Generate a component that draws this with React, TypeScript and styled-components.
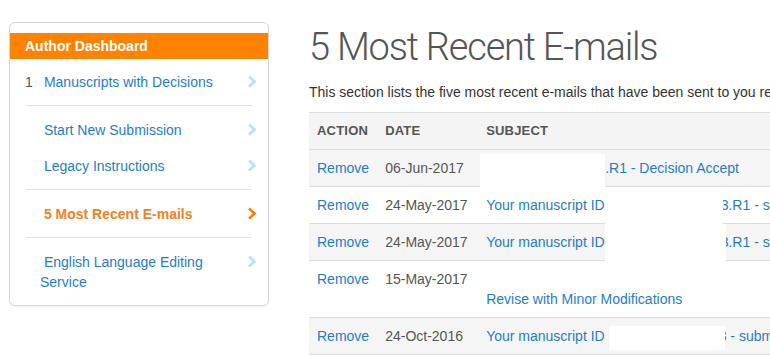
import React from 'react';
import styled, { createGlobalStyle } from 'styled-components';

const GlobalStyle = createGlobalStyle`
  html, body {
    margin: 0;
    overflow: hidden;
    background: #fff;
    font-family: "Liberation Sans", Arial, sans-serif;
  }
`;

const Page = styled.div`
  display: flex;
  align-items: flex-start;
  gap: 40px;
  padding: 22px 0 0 9px;
  width: 1200px;
`;

const Card = styled.nav`
  width: 258px;
  flex-shrink: 0;
  border: 1px solid #d6d6d6;
  border-radius: 6px;
  padding-top: 10px;
  box-shadow: 0 1px 2px rgba(0, 0, 0, 0.06);
`;

const CardHeader = styled.div`
  background: #ff8200;
  color: #fff;
  font-weight: bold;
  font-size: 14px;
  line-height: 26px;
  padding-left: 15px;
`;

const Group = styled.div<{ $first?: boolean }>`
  padding: ${(p) => (p.$first ? '5px' : '6px')} 0 5px;
  margin: 0 16px;
  & + & {
    border-top: 1px solid #e2e2e2;
  }
`;

const Item = styled.div<{ $active?: boolean }>`
  display: flex;
  align-items: flex-start;
  padding: 8px 0;
  margin: 0 -5px 0 -1px;
  font-size: 14px;
  line-height: 20px;
  color: ${(p) => (p.$active ? '#f7801e' : '#1e7ec8')};
  font-weight: ${(p) => (p.$active ? 'bold' : 'normal')};
`;

const Num = styled.span`
  width: 15px;
  flex-shrink: 0;
  color: #555;
  font-weight: normal;
`;

const Label = styled.span`
  flex: 1;
  white-space: pre-wrap;
`;

const Chevron = styled.svg`
  flex-shrink: 0;
  margin-top: 3px;
`;

const Main = styled.main`
  width: 620px;
  flex-shrink: 0;
  padding-top: 2px;
`;

const Title = styled.h1`
  margin: 0;
  font-family: Roboto, "Open Sans", sans-serif;
  font-weight: 300;
  font-size: 38px;
  letter-spacing: -1.2px;
  line-height: 46px;
  color: #555;
`;

const Intro = styled.p`
  margin: 12px 0 10px 0;
  font-size: 14px;
  line-height: 20px;
  color: #333;
  white-space: nowrap;
`;

const Table = styled.table`
  width: 620px;
  border-collapse: separate;
  border-spacing: 0;
  border-top: 1px solid #dcdcdc;
  font-size: 14px;
  line-height: 20px;
`;

const Th = styled.th<{ $w?: number }>`
  text-align: left;
  background: #f4f4f4;
  color: #555;
  font-size: 13px;
  letter-spacing: 0.2px;
  font-weight: bold;
  padding: 8px;
  border-bottom: 1px solid #dcdcdc;
  width: ${(p) => (p.$w ? `${p.$w}px` : 'auto')};
  box-sizing: border-box;
`;

const Row = styled.tr<{ $shade?: boolean }>`
  background: ${(p) => (p.$shade ? '#f5f5f5' : '#fff')};
`;

const Td = styled.td`
  position: relative;
  vertical-align: top;
  padding: 8px;
  border-bottom: 1px solid #dcdcdc;
  color: #555;
  white-space: nowrap;
`;

const Link = styled.span`
  color: #1e7ec8;
`;

const Gap = styled.span<{ $w: number }>`
  display: inline-block;
  width: ${(p) => p.$w}px;
`;

const BlankLine = styled.span`
  display: block;
  height: 20px;
`;

// white boxes laid over the redacted part of a subject
const Redact = styled.span<{ $x: number; $y: number; $w: number; $h: number }>`
  position: absolute;
  left: ${(p) => p.$x}px;
  top: ${(p) => p.$y}px;
  width: ${(p) => p.$w}px;
  height: ${(p) => p.$h}px;
  background: #fff;
`;

const ChevronIcon = ({ color }: { color: string }) => (
  <Chevron width="10" height="13" viewBox="0 0 10 13">
    <polyline
      points="2,1.5 7.5,6.5 2,11.5"
      fill="none"
      stroke={color}
      strokeWidth="2.6"
    />
  </Chevron>
);

type NavItem = { num?: string; label: string; active?: boolean };

const groups: NavItem[][] = [
  [{ num: '1', label: ' Manuscripts with Decisions' }],
  [{ label: ' Start New Submission' }, { label: ' Legacy Instructions' }],
  [{ label: ' 5 Most Recent E-mails', active: true }],
  [{ label: ' English Language Editing Service' }],
];

export default function App() {
  return (
    <>
      <GlobalStyle />
      <Page>
        <Card>
          <CardHeader>Author Dashboard</CardHeader>
          {groups.map((group, gi) => (
            <Group key={gi} $first={gi === 0}>
              {group.map((item) => (
                <Item key={item.label} $active={item.active}>
                  <Num>{item.num}</Num>
                  <Label>{item.label}</Label>
                  <ChevronIcon color={item.active ? '#ff8000' : '#b5e2f6'} />
                </Item>
              ))}
            </Group>
          ))}
        </Card>

        <Main>
          <Title>5 Most Recent E-mails</Title>
          <Intro>
            This section lists the five most recent e-mails that have been sent to you
            regarding your manuscripts.
          </Intro>
          <Table>
            <thead>
              <tr>
                <Th $w={68}>ACTION</Th>
                <Th $w={101}>DATE</Th>
                <Th>SUBJECT</Th>
              </tr>
            </thead>
            <tbody>
              <Row $shade>
                <Td><Link>Remove</Link></Td>
                <Td>06-Jun-2017</Td>
                <Td>
                  <Link>
                    <Gap $w={119} />
                    .R1 - Decision Accept
                  </Link>
                  <Redact $x={2} $y={4} $w={125} $h={33} />
                </Td>
              </Row>
              <Row>
                <Td><Link>Remove</Link></Td>
                <Td>24-May-2017</Td>
                <Td>
                  <Link>
                    Your manuscript ID
                    <Gap $w={116} />
                    3.R1 - submitted
                  </Link>
                  <Redact $x={127} $y={0} $w={118} $h={37} />
                </Td>
              </Row>
              <Row $shade>
                <Td><Link>Remove</Link></Td>
                <Td>24-May-2017</Td>
                <Td>
                  <Link>
                    Your manuscript ID
                    <Gap $w={116} />
                    3.R1 - submitted
                  </Link>
                  <Redact $x={127} $y={0} $w={121} $h={37} />
                </Td>
              </Row>
              <Row>
                <Td><Link>Remove</Link></Td>
                <Td>15-May-2017</Td>
                <Td>
                  <Link>
                    <BlankLine />
                    Revise with Minor Modifications
                  </Link>
                </Td>
              </Row>
              <Row $shade>
                <Td><Link>Remove</Link></Td>
                <Td>24-Oct-2016</Td>
                <Td>
                  <Link>
                    Your manuscript ID
                    <Gap $w={114} />
                    3 - submitted
                  </Link>
                  <Redact $x={131} $y={8} $w={116} $h={24} />
                </Td>
              </Row>
            </tbody>
          </Table>
        </Main>
      </Page>
    </>
  );
}
